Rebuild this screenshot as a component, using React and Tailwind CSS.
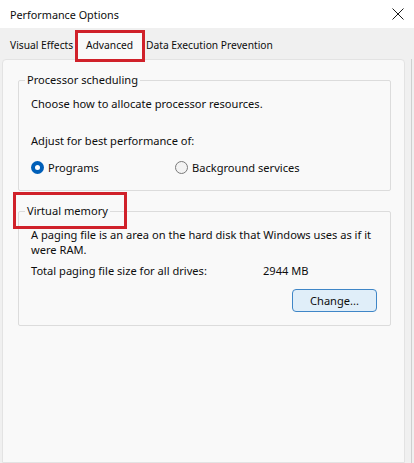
import React from "react";

function Radio({ checked, label }) {
  return (
    <label className="flex items-center gap-[4px]">
      {checked ? (
        <span className="w-[13px] h-[13px] rounded-full bg-[#005fb8] flex items-center justify-center">
          <span className="w-[5px] h-[5px] rounded-full bg-white" />
        </span>
      ) : (
        <span className="w-[13px] h-[13px] rounded-full border border-[#7a7a7a] bg-[#f3f3f3]" />
      )}
      <span>{label}</span>
    </label>
  );
}

export default function App() {
  return (
    <div
      className="w-[414px] h-[463px] bg-[#f0f0f0] flex flex-col overflow-hidden text-[11.1px] leading-[15px] text-[#0d0d0d]"
      style={{ fontFamily: '"Noto Sans", "Open Sans", sans-serif' }}
    >
      <div className="h-[28px] shrink-0 bg-white flex items-center justify-between pl-[10px] pr-[10px]">
        <span className="text-[10.8px]">Performance Options</span>
        <svg width="12" height="12" viewBox="0 0 12 12" className="text-[#1a1a1a]">
          <path d="M0.5 0.5L11.5 11.5M11.5 0.5L0.5 11.5" stroke="currentColor" strokeWidth="1" />
        </svg>
      </div>

      <div className="flex items-end h-[31px] shrink-0 pl-[10px] text-[10.25px] relative z-10">
        <div className="pb-[6px] w-[65px]">Visual Effects</div>
        <div className="-mb-[3px] border-[3px] border-[#d0212a] h-[32px] w-[70px] bg-[#f9f9f9] pl-[8px] pt-[5px]">
          Advanced
        </div>
        <div className="pb-[6px] pl-[1px]">Data Execution Prevention</div>
      </div>

      <div className="flex flex-1">
        <div className="w-[403px] ml-[2px] bg-[#f9f9f9] border border-[#e3e3e3] rounded-t-[4px] pl-[15px] pr-[13px] pt-[12px] flex flex-col gap-[12px]">
          <fieldset className="border border-[#dcdcdc] rounded-[2px] pl-[12px] pr-[10px] pb-[15px]">
            <legend className="px-[2px] -ml-[6px] leading-[16px]">Processor scheduling</legend>
            <div className="pt-[8px]">Choose how to allocate processor resources.</div>
            <div className="pt-[22px]">Adjust for best performance of:</div>
            <div className="flex pt-[12px]">
              <div className="w-[144px]">
                <Radio checked label="Programs" />
              </div>
              <Radio label="Background services" />
            </div>
          </fieldset>

          <div className="relative">
            <fieldset className="border border-[#dcdcdc] rounded-[2px] pl-[12px] pr-[13px] pb-[13px]">
              <legend className="px-[2px] -ml-[6px] leading-[16px]">Virtual memory</legend>
              <div className="pt-[8px]">
                A paging file is an area on the hard disk that Windows uses as if it
                <br />
                were RAM.
              </div>
              <div className="flex pt-[6px]">
                <div className="w-[232px]">Total paging file size for all drives:</div>
                <div>2944 MB</div>
              </div>
              <div className="flex justify-end pt-[11px]">
                <button className="w-[85px] h-[23px] bg-[#e0eef9] border border-[#3f86c7] rounded-[4px] leading-[15px]">
                  Change...
                </button>
              </div>
            </fieldset>
            <div className="absolute -left-[5px] -top-[11px] w-[114px] h-[37px] border-[3px] border-[#d0212a]" />
          </div>
        </div>
        <div className="flex-1 flex justify-end pr-[2px]">
          <div className="w-[1px] bg-[#cfcfcf]" />
        </div>
      </div>
    </div>
  );
}
